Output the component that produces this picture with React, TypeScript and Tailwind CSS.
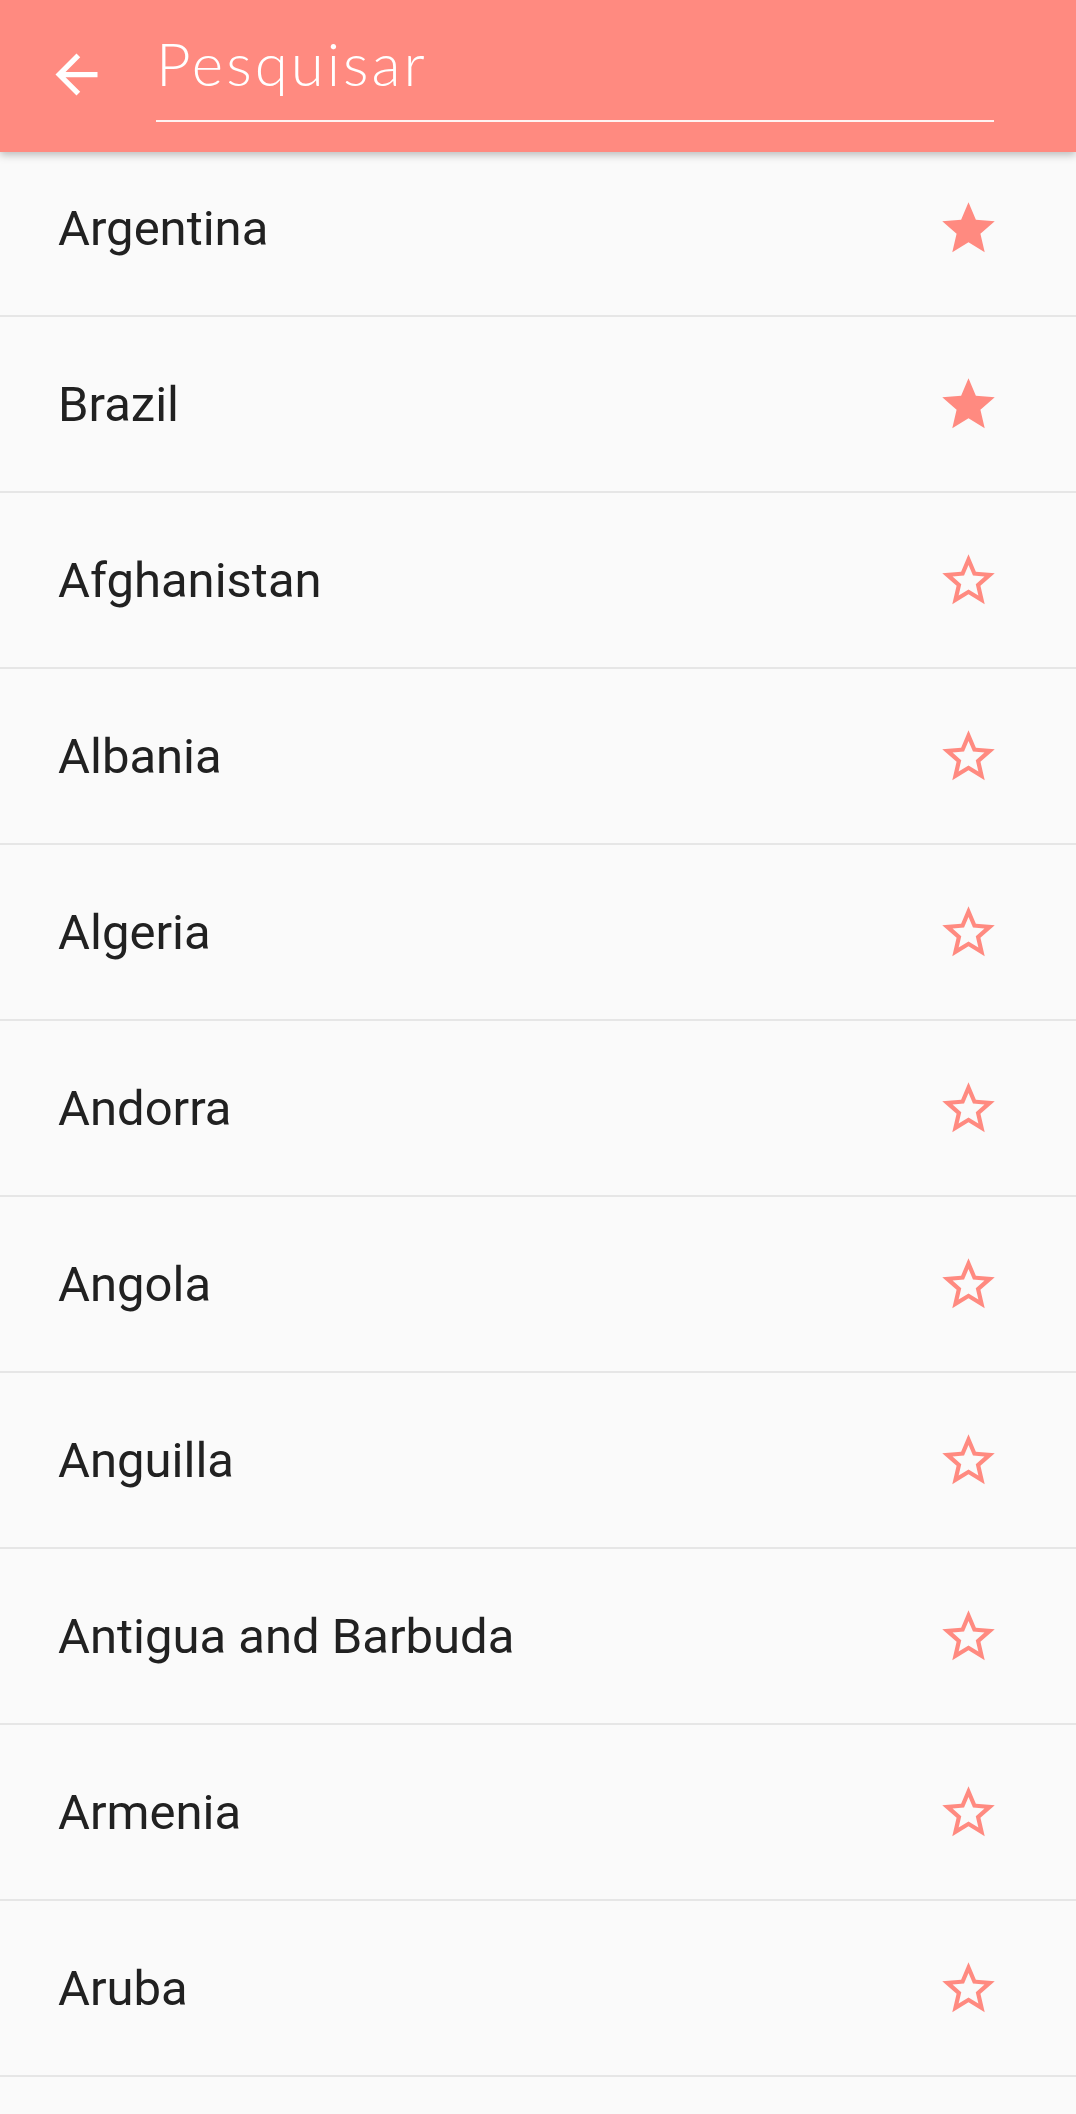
const countries = [
  { name: "Argentina", fav: true },
  { name: "Brazil", fav: true },
  { name: "Afghanistan", fav: false },
  { name: "Albania", fav: false },
  { name: "Algeria", fav: false },
  { name: "Andorra", fav: false },
  { name: "Angola", fav: false },
  { name: "Anguilla", fav: false },
  { name: "Antigua and Barbuda", fav: false },
  { name: "Armenia", fav: false },
  { name: "Aruba", fav: false },
];

const Star = ({ filled }: { filled: boolean }) => (
  <svg viewBox="0 0 24 24" className="h-[63px] w-[63px] fill-[#ff8a80]">
    {filled ? (
      <path d="M12 17.27L18.18 21l-1.64-7.03L22 9.24l-7.19-.61L12 2 9.19 8.63 2 9.24l5.46 4.73L5.82 21z" />
    ) : (
      <path d="M22 9.24l-7.19-.62L12 2 9.19 8.63 2 9.24l5.46 4.73L5.82 21 12 17.27 18.18 21l-1.63-7.03L22 9.24zM12 15.4l-3.76 2.27 1-4.28-3.32-2.88 4.38-.38L12 6.1l1.71 4.04 4.38.38-3.32 2.88 1 4.28L12 15.4z" />
    )}
  </svg>
);

const App = () => {
  return (
    <div className="h-[2114px] w-full overflow-hidden bg-[#fafafa] font-['Roboto',sans-serif]">
      <header className="relative z-10 flex h-[152px] items-start bg-[#ff8a80] shadow-[0_3px_8px_rgba(0,0,0,0.25)]">
        <svg viewBox="0 0 24 24" className="ml-[45px] mt-[43px] h-[63px] w-[63px] fill-white">
          <path d="M20 11H7.83l5.59-5.59L12 4l-8 8 8 8 1.41-1.41L7.83 13H20v-2z" />
        </svg>
        <div className="ml-[48px] mr-[82px] mt-[16px] h-[106px] flex-1 border-b-2 border-white/90 pt-[12px]">
          <span className="font-['Lato',sans-serif] text-[60px] font-light leading-[70px] tracking-[3px] text-white">
            Pesquisar
          </span>
        </div>
      </header>

      <ul className="-mt-[11px]">
        {countries.map((c) => (
          <li
            key={c.name}
            className="flex h-[176px] items-center justify-between border-b-2 border-[#e6e6e6] pl-[58px] pr-[76px]"
          >
            <span className="text-[49px] leading-none text-[#212121]">{c.name}</span>
            <Star filled={c.fav} />
          </li>
        ))}
      </ul>
    </div>
  );
};

export default App;
